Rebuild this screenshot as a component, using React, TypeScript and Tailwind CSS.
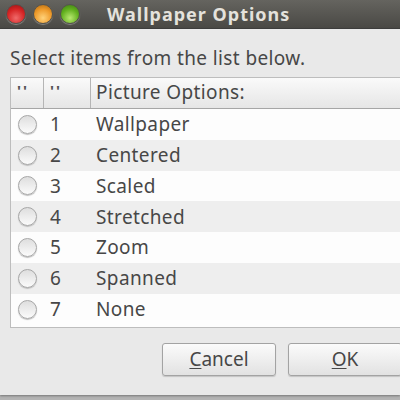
const rows = ["Wallpaper", "Centered", "Scaled", "Stretched", "Zoom", "Spanned", "None"];

function Dot({ c }: { c: string }) {
  return (
    <div className={`h-[20px] w-[20px] rounded-full border border-[#55534e] shadow-[0_1px_1px_#8a8a86] ${c}`} />
  );
}

function Quote() {
  return <span className="font-bold tracking-[2px] text-[#555555]">''</span>;
}

export default function App() {
  return (
    <div className="h-[400px] w-[400px] overflow-hidden bg-[#b4b4b4] font-['Noto_Sans',sans-serif]">
      <div className="flex h-[29px] items-center border-b border-[#3a3a38] bg-gradient-to-b from-[#65645f] to-[#4a4945] pl-[6px]">
        <div className="flex gap-[7px]">
          <Dot c="bg-[radial-gradient(circle_at_50%_72%,#f06a6a,#d62424_55%,#8f1414)]" />
          <Dot c="bg-[radial-gradient(circle_at_50%_72%,#ffd27a,#ee9a2a_55%,#a8640f)]" />
          <Dot c="bg-[radial-gradient(circle_at_50%_72%,#b8e870,#62b01e_55%,#3b7a14)]" />
        </div>
        <div className="ml-[27px] text-[18px] font-bold leading-none tracking-[1px] text-[#e4e2dc]">Wallpaper Options</div>
      </div>
      <div className="h-[366px] bg-[#e9e9e9] pl-[10px] shadow-[0_1px_2px_#777]">
        <div className="pt-[17px] text-[19px] leading-[25px] tracking-[0.38px] text-[#474747]">Select items from the list below.</div>
        <div className="mt-[6px] w-[400px] border border-[#bdbdbd] bg-[#fdfdfd] pb-[2px] text-[19px] text-[#474747]">
          <div className="flex h-[31px] border-b border-[#a6a6a6] bg-gradient-to-b from-[#fafafa] to-[#e6e6e6]">
            <div className="w-[33px] border-r border-[#b5b5b5] pl-[6px] text-[15px] leading-[24px]"><Quote /></div>
            <div className="w-[47px] border-r border-[#b5b5b5] pl-[6px] text-[15px] leading-[24px]"><Quote /></div>
            <div className="pl-[5px] leading-[29px] tracking-[0.38px]">Picture Options:</div>
          </div>
          {rows.map((r, i) => (
            <div key={r} className={`flex h-[30.8px] items-center ${i % 2 ? "bg-[#eeeeee]" : "bg-[#fdfdfd]"}`}>
              <div className="w-[33px] pl-[7px]">
                <div className="h-[19px] w-[19px] rounded-full border-[1.5px] border-[#a6a6a6] bg-gradient-to-b from-[#dedede] to-[#fbfbfb] shadow-[0_1px_1px_#bdbdbd]" />
              </div>
              <div className="w-[47px] pl-[6px]">{i + 1}</div>
              <div className="pl-[5px] tracking-[0.38px]">{r}</div>
            </div>
          ))}
        </div>
        <div className="mt-[15px] flex gap-[12px] pl-[152px]">
          <button className="h-[33px] w-[114px] shrink-0 rounded-[3px] border border-[#a3a3a3] bg-gradient-to-b from-[#fbfbfb] to-[#e2e2e2] text-[19px] leading-none text-[#474747] shadow-[0_1px_1px_#c4c4c4]">
            <span className="underline underline-offset-2">C</span>ancel
          </button>
          <button className="h-[33px] w-[114px] shrink-0 rounded-[3px] border border-[#a3a3a3] bg-gradient-to-b from-[#fbfbfb] to-[#e2e2e2] text-[19px] leading-none text-[#474747] shadow-[0_1px_1px_#c4c4c4]">
            <span className="underline underline-offset-2">O</span>K
          </button>
        </div>
      </div>
    </div>
  );
}
